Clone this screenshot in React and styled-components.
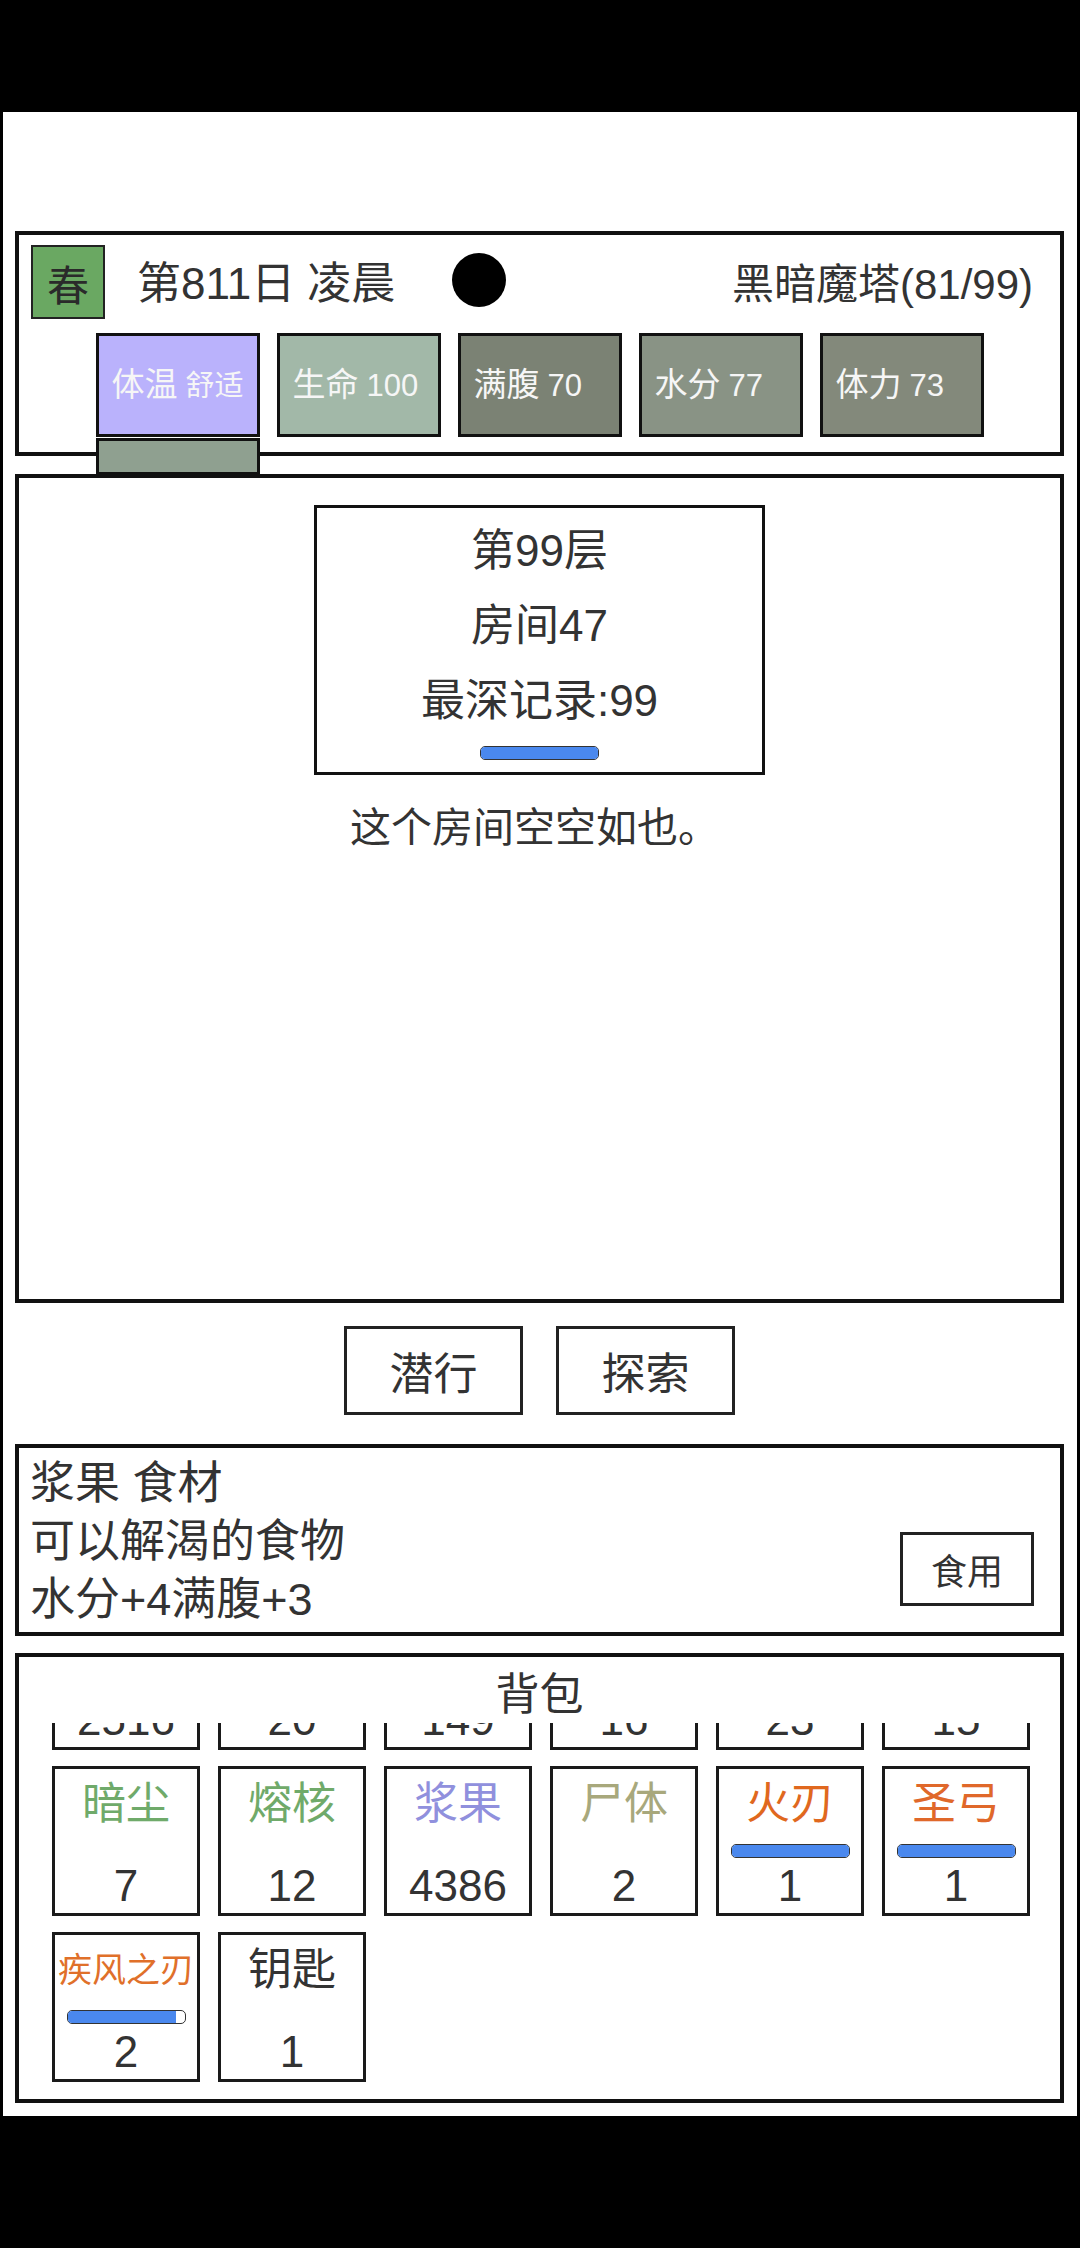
import { useLayoutEffect, useRef } from 'react';
import styled, { createGlobalStyle } from 'styled-components';

const GlobalStyle = createGlobalStyle`
  html, body {
    margin: 0;
    padding: 0;
    background: #000;
  }
  * {
    box-sizing: border-box;
  }
  body {
    font-family: "Liberation Sans", "Noto Sans CJK SC", sans-serif;
    color: #333;
  }
`;

const Screen = styled.div`
  width: 1080px;
  height: 2248px;
  background: #000;
  padding-top: 112px;
`;

const Frame = styled.div`
  margin: 0 3px;
  height: 2004px;
  background: #fff;
  padding: 119px 13px 0 12px;
  display: flex;
  flex-direction: column;
`;

const Panel = styled.section`
  border: 4px solid #111;
  background: #fff;
  position: relative;
`;

/* ---- top status panel ---- */
const StatusPanel = styled(Panel)`
  height: 225px;
  padding: 10px 27px 15px 12px;
  display: flex;
  flex-direction: column;
  gap: 14px;
  z-index: 2;
`;

const HeaderRow = styled.div`
  display: flex;
  align-items: center;
  height: 74px;
`;

const Season = styled.div`
  width: 74px;
  height: 74px;
  background: #6aa862;
  border: 2px solid #222;
  font-size: 42px;
  display: flex;
  align-items: center;
  justify-content: center;
  color: #2a2a2a;
`;

const DayText = styled.div`
  font-size: 44px;
  margin-left: 32px;
  margin-top: -4px;
`;

const Moon = styled.div`
  width: 54px;
  height: 54px;
  border-radius: 50%;
  background: #000;
  margin-left: 57px;
  margin-top: -4px;
`;

const Place = styled.div`
  margin-left: auto;
  font-size: 42px;
  margin-top: -4px;
`;

const StatRow = styled.div`
  display: flex;
  justify-content: center;
  gap: 17px;
  margin-right: -15px;
`;

const StatBox = styled.div`
  position: relative;
  width: 164px;
  height: 104px;
  border: 3px solid #111;
  background: ${p => p.$bg};
  color: #f6f6f6;
  display: flex;
  align-items: center;
  padding-left: ${p => (p.$tight ? 10 : 13)}px;
  white-space: nowrap;
`;

const StatText = styled.div`
  font-size: 33px;
  line-height: 40px;

  span {
    margin-left: 8px;
    font-size: ${p => (p.$tight ? 29 : 31)}px;
  }
`;

const StatDrop = styled.div`
  position: absolute;
  left: -3px;
  top: calc(100% + 4px);
  width: 164px;
  height: 37px;
  background: #8fa090;
  border: 3px solid #111;
`;

/* ---- room panel ---- */
const RoomPanel = styled(Panel)`
  margin-top: 18px;
  height: 829px;
  padding-top: 27px;
  display: flex;
  flex-direction: column;
  align-items: center;
`;

const FloorCard = styled.div`
  width: 451px;
  height: 270px;
  border: 3px solid #111;
  padding-top: 5px;
  display: flex;
  flex-direction: column;
  align-items: center;
`;

const FloorLine = styled.div`
  font-size: 44px;
  line-height: 75px;
`;

const Bar = styled.div`
  width: ${p => p.$w || 119}px;
  height: 14px;
  border: 1px solid #333;
  border-radius: 5px;
  background: #fff;
  overflow: hidden;
  margin-top: ${p => p.$mt || 0}px;

  div {
    height: 100%;
    background: #4a88ee;
  }
`;

const RoomText = styled.div`
  font-size: 41px;
  line-height: 50px;
  margin-top: 28px;
  margin-right: 10px;
`;

/* ---- actions ---- */
const ActionRow = styled.div`
  margin-top: 23px;
  display: flex;
  justify-content: center;
  gap: 33px;
`;

const ActionButton = styled.div`
  width: 179px;
  height: 89px;
  border: 3px solid #222;
  font-size: 44px;
  display: flex;
  align-items: center;
  justify-content: center;
`;

/* ---- item description ---- */
const DescPanel = styled(Panel)`
  margin-top: 29px;
  height: 192px;
  padding: 7px 26px 0 11px;
  display: flex;
`;

const DescText = styled.div`
  flex: 1;
  font-size: 45px;
  line-height: 58px;
`;

const UseButton = styled.div`
  align-self: flex-end;
  margin-bottom: 26px;
  width: 134px;
  height: 74px;
  border: 3px solid #222;
  font-size: 36px;
  display: flex;
  align-items: center;
  justify-content: center;
`;

/* ---- backpack ---- */
const BagPanel = styled(Panel)`
  margin-top: 17px;
  height: 450px;
  padding-top: 10px;
`;

const BagTitle = styled.div`
  font-size: 44px;
  line-height: 56px;
  text-align: center;
`;

const BagScroll = styled.div`
  height: 376px;
  overflow: hidden;
`;

const BagGrid = styled.div`
  display: grid;
  grid-template-columns: repeat(6, 148px);
  column-gap: 18px;
  row-gap: 16px;
  justify-content: center;
  padding: 0 0 17px 3px;
`;

const Cell = styled.div`
  height: 150px;
  border: 3px solid #1a1a1a;
  padding-top: 10px;
  display: flex;
  flex-direction: column;
  align-items: center;
`;

const CellName = styled.div`
  font-size: ${p => (p.$small ? 34 : 44)}px;
  line-height: 50px;
  color: ${p => p.$color || '#333'};
  white-space: nowrap;
`;

const BarSlot = styled.div`
  height: 14px;
  margin-top: 15px;
`;

const CellCount = styled.div`
  font-size: 44px;
  line-height: 50px;
  margin-top: 3px;
`;

const stats = [
  { label: '体温', value: '舒适', bg: '#bab2fc', tight: true, drop: true },
  { label: '生命', value: '100', bg: '#a2b8a8' },
  { label: '满腹', value: '70', bg: '#7b8274' },
  { label: '水分', value: '77', bg: '#899385' },
  { label: '体力', value: '73', bg: '#83897b' },
];

const items = [
  { name: '木材', count: 2516 },
  { name: '石块', count: 20 },
  { name: '兽皮', count: 149 },
  { name: '骨头', count: 16 },
  { name: '清水', count: 23 },
  { name: '铁矿', count: 15 },
  { name: '暗尘', count: 7, color: '#6faa6a' },
  { name: '熔核', count: 12, color: '#70aa6a' },
  { name: '浆果', count: 4386, color: '#9090dd' },
  { name: '尸体', count: 2, color: '#a8a87c' },
  { name: '火刃', count: 1, color: '#e0681e', bar: 100 },
  { name: '圣弓', count: 1, color: '#e0682a', bar: 100 },
  { name: '疾风之刃', count: 2, color: '#e0702a', bar: 93, small: true },
  { name: '钥匙', count: 1 },
];

export default function App() {
  const bagRef = useRef(null);

  useLayoutEffect(() => {
    if (bagRef.current) {
      bagRef.current.scrollTop = bagRef.current.scrollHeight;
    }
  }, []);

  return (
    <Screen>
      <GlobalStyle />
      <Frame>
        <StatusPanel>
          <HeaderRow>
            <Season>春</Season>
            <DayText>第811日 凌晨</DayText>
            <Moon />
            <Place>黑暗魔塔(81/99)</Place>
          </HeaderRow>
          <StatRow>
            {stats.map(s => (
              <StatBox key={s.label} $bg={s.bg}>
                <StatText $tight={s.tight}>
                  {s.label}<span>{s.value}</span>
                </StatText>
                {s.drop && <StatDrop />}
              </StatBox>
            ))}
          </StatRow>
        </StatusPanel>

        <RoomPanel>
          <FloorCard>
            <FloorLine>第99层</FloorLine>
            <FloorLine>房间47</FloorLine>
            <FloorLine>最深记录:99</FloorLine>
            <Bar $mt={8}><div style={{ width: '100%' }} /></Bar>
          </FloorCard>
          <RoomText>这个房间空空如也。</RoomText>
        </RoomPanel>

        <ActionRow>
          <ActionButton>潜行</ActionButton>
          <ActionButton>探索</ActionButton>
        </ActionRow>

        <DescPanel>
          <DescText>
            <div>浆果 食材</div>
            <div>可以解渴的食物</div>
            <div>水分+4满腹+3</div>
          </DescText>
          <UseButton>食用</UseButton>
        </DescPanel>

        <BagPanel>
          <BagTitle>背包</BagTitle>
          <BagScroll ref={bagRef}>
            <BagGrid>
              {items.map(it => (
                <Cell key={it.name}>
                  <CellName $color={it.color} $small={it.small}>{it.name}</CellName>
                  <BarSlot>
                    {it.bar && (
                      <Bar><div style={{ width: `${it.bar}%` }} /></Bar>
                    )}
                  </BarSlot>
                  <CellCount>{it.count}</CellCount>
                </Cell>
              ))}
            </BagGrid>
          </BagScroll>
        </BagPanel>
      </Frame>
    </Screen>
  );
}
